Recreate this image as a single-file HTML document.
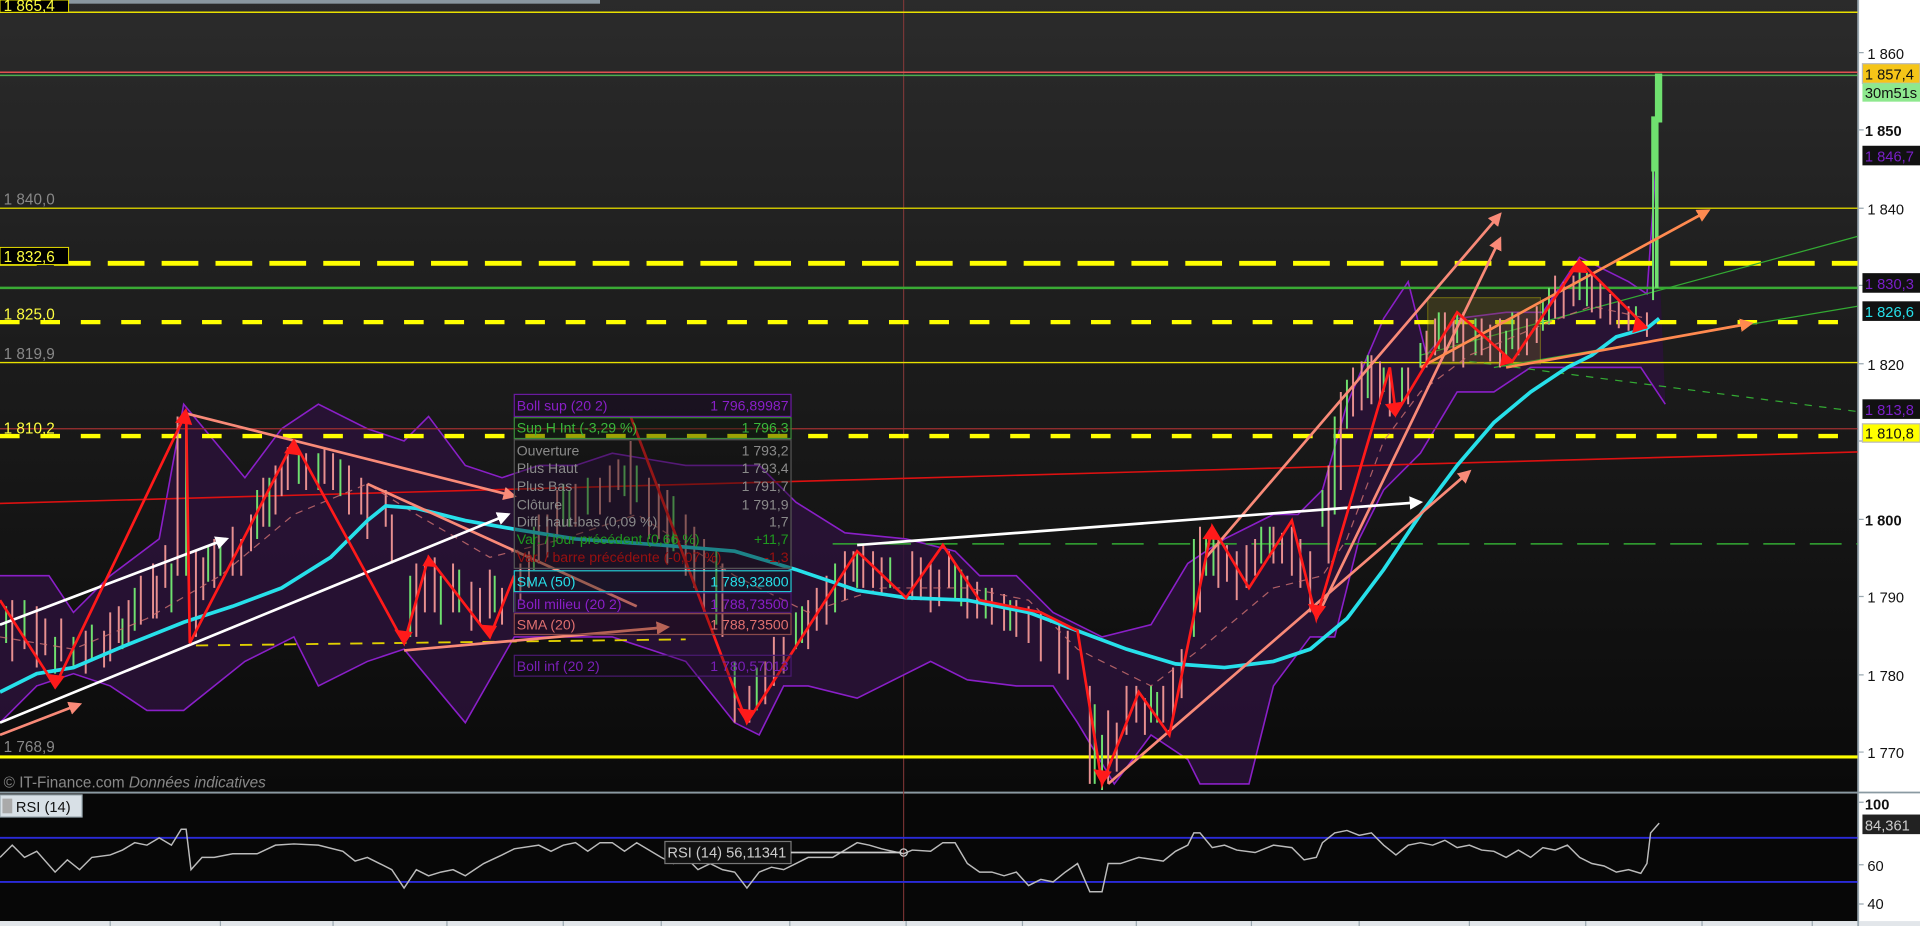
<!DOCTYPE html>
<html><head><meta charset="utf-8"><style>
html,body{margin:0;padding:0;background:#fff;overflow:hidden}
svg{display:block}
text{font-family:"Liberation Sans",sans-serif}
</style></head><body>
<svg width="1920" height="926" viewBox="0 0 1568 756" preserveAspectRatio="none" xmlns="http://www.w3.org/2000/svg">
<defs>
<linearGradient id="bg" x1="0" y1="0" x2="0" y2="1">
<stop offset="0" stop-color="#2b2b2b"/><stop offset="0.5" stop-color="#1a1a1a"/><stop offset="1" stop-color="#0a0a0a"/>
</linearGradient>
<marker id="as" viewBox="0 0 10 10" refX="8" refY="5" markerWidth="5" markerHeight="5" orient="auto"><path d="M0,0L10,5L0,10z" fill="#f98a78"/></marker>
<marker id="aw" viewBox="0 0 10 10" refX="8" refY="5" markerWidth="5" markerHeight="5" orient="auto"><path d="M0,0L10,5L0,10z" fill="#fff"/></marker>
<marker id="ao" viewBox="0 0 10 10" refX="8" refY="5" markerWidth="5" markerHeight="5" orient="auto"><path d="M0,0L10,5L0,10z" fill="#ff8a50"/></marker>
</defs>
<rect x="0" y="0" width="1517" height="648" fill="url(#bg)"/>
<rect x="0" y="648" width="1517" height="104" fill="#070707"/>
<rect x="1517" y="0" width="51" height="756" fill="#fff"/>
<rect x="0" y="752" width="1568" height="4" fill="#e2e6ea"/>
<line x1="1517.5" y1="0" x2="1517.5" y2="756" stroke="#9aa8b0" stroke-width="1.5"/>
<line x1="0" y1="647" x2="1568" y2="647" stroke="#8a9aa2" stroke-width="1.5"/>
<rect x="0" y="0" width="490" height="3" fill="#8a97a0"/>
<line x1="738" y1="0" x2="738" y2="752" stroke="#8a3a3a" stroke-width="0.8"/>

<!-- bollinger fill -->
<path d="M0,470 L40,470 60,500 90,470 130,440 150,330 200,390 230,350 260,330 300,350 330,360 350,340 380,380 410,390 440,380 470,380 500,370 560,380 620,380 650,410 690,435 740,440 780,450 800,470 830,470 860,500 880,510 900,520 940,510 970,460 1000,440 1040,420 1060,420 1080,400 1100,330 1130,260 1150,230 1165,290 1190,260 1230,255 1260,255 1290,210 1330,230 1345,240 1352,140 1360,330 1340,300 1300,300 1250,300 1220,320 1190,320 1160,370 1130,400 1110,440 1090,520 1070,520 1040,560 1020,640 980,640 970,620 940,600 910,640 880,590 860,560 830,560 790,555 760,540 720,560 700,570 660,560 640,560 620,600 600,590 560,540 500,520 460,520 420,520 380,590 330,530 300,540 260,560 240,520 200,540 150,580 120,580 90,560 60,550 30,560 0,590 Z" fill="#2a1238" opacity="0.85"/>
<path d="M0,470 L40,470 60,500 90,470 130,440 150,330 200,390 230,350 260,330 300,350 330,360 350,340 380,380 410,390 440,380 470,380 500,370 560,380 620,380 650,410 690,435 740,440 780,450 800,470 830,470 860,500 880,510 900,520 940,510 970,460 1000,440 1040,420 1060,420 1080,400 1100,330 1130,260 1150,230 1165,290 1190,260 1230,255 1260,255 1290,210 1330,230 1345,240 1352,140" fill="none" stroke="#8a1fc8" stroke-width="1.3"/>
<path d="M1360,330 L1340,300 1300,300 1250,300 1220,320 1190,320 1160,370 1130,400 1110,440 1090,520 1070,520 1040,560 1020,640 980,640 970,620 940,600 910,640 880,590 860,560 830,560 790,555 760,540 720,560 700,570 660,560 640,560 620,600 600,590 560,540 500,520 460,520 420,520 380,590 330,530 300,540 260,560 240,520 200,540 150,580 120,580 90,560 60,550 30,560 0,590" fill="none" stroke="#8a1fc8" stroke-width="1.3"/>

<!-- horizontal levels -->
<line x1="0" y1="10" x2="1517" y2="10" stroke="#e8e000" stroke-width="1.3"/>
<line x1="0" y1="59" x2="1517" y2="59" stroke="#e05050" stroke-width="1.2"/>
<line x1="0" y1="61.5" x2="1517" y2="61.5" stroke="#4caf50" stroke-width="1.2"/>
<line x1="0" y1="170" x2="1517" y2="170" stroke="#c8c000" stroke-width="1.2"/>
<line x1="0" y1="215" x2="1517" y2="215" stroke="#ffff00" stroke-width="4" stroke-dasharray="30,14"/>
<line x1="0" y1="235" x2="1517" y2="235" stroke="#3aaa35" stroke-width="2"/>
<line x1="0" y1="263" x2="1517" y2="263" stroke="#ffff00" stroke-width="3.5" stroke-dasharray="16,17"/>
<line x1="0" y1="296" x2="1517" y2="296" stroke="#e8e000" stroke-width="1.2"/>
<line x1="0" y1="350" x2="1517" y2="350" stroke="#a03030" stroke-width="1"/>
<line x1="0" y1="356" x2="1517" y2="356" stroke="#ffff00" stroke-width="3.5" stroke-dasharray="16,17"/>
<line x1="0" y1="411" x2="1517" y2="369" stroke="#dd1111" stroke-width="1.3"/>
<line x1="680" y1="444" x2="1517" y2="444" stroke="#33aa33" stroke-width="1.2" stroke-dasharray="26,12"/>
<line x1="0" y1="618" x2="1517" y2="618" stroke="#ffff00" stroke-width="2.5"/>
<line x1="160" y1="527" x2="560" y2="522" stroke="#e0d000" stroke-width="1.5" stroke-dasharray="10,8"/>
<line x1="1200" y1="295" x2="1517" y2="336" stroke="#33aa33" stroke-width="1" stroke-dasharray="6,6"/>
<line x1="1160" y1="290" x2="1517" y2="193" stroke="#33aa33" stroke-width="1"/>
<line x1="1220" y1="300" x2="1517" y2="250" stroke="#33aa33" stroke-width="1"/>
<rect x="1166" y="243" width="92" height="54" fill="#6a6020" opacity="0.35" stroke="#e8e000" stroke-width="1"/>

<!-- candle texture -->
<g stroke="#e89090" stroke-width="1.6">
<path d="M10,490V540M20,500V530M30,495V545M50,505V540M70,515V550M90,500V540M105,490V525M115,470V510M125,460V505M135,445V480M145,340V470M160,450V520M175,440V480M190,430V470M205,420V450M215,390V430M225,380V420M235,365V400M250,370V400M265,365V395M285,380V420M300,395V440M315,400V430M340,460V520M355,455V500M370,460V500M385,475V515M400,465V505M410,480V510M425,460V490M440,420V460M455,400V440M470,395V430M490,390V420M505,375V400M515,360V420M530,390V440M545,400V460M560,420V470M575,440V500M590,460V520M612,560V590M625,540V575M640,520V550M660,490V530M675,470V510M690,450V490M705,445V480M720,455V485M745,450V490M760,460V500M775,450V480M790,470V505M810,480V510M830,490V520M850,500V540M865,510V550M890,560V640M905,580V640M920,560V600M935,570V600M950,560V590M965,530V570M980,430V500M995,440V480M1010,450V490M1025,440V470M1040,430V460M1055,430V470M1070,450V500M1085,380V460M1095,320V400M1105,300V340M1120,290V330M1135,300V340M1150,300V330M1165,270V300M1180,255V290M1195,255V300M1210,260V290M1225,260V300M1240,255V290M1255,250V280M1270,225V260M1285,225V250M1300,225V255M1315,240V265M1330,250V270M1345,255V275"/>
<path d="M37,505V535M85,515V545M97,495V525M128,470V505M166,455V490M197,440V470M230,380V405M272,370V400M295,390V420M320,420V460M347,460V500M392,480V510M432,450V480M447,420V455M498,380V410M538,395V440M567,430V480M600,560V590M632,520V560M667,480V515M697,450V475M713,450V480M752,455V490M767,465V495M798,475V505M820,485V515M840,495V525M872,515V555M912,590V630M928,560V590M958,545V585M1002,445V475M1018,445V480M1047,435V460M1062,440V480M1112,295V335M1127,295V330M1172,260V290M1187,260V295M1217,265V295M1247,260V290M1277,230V260M1307,230V260M1322,245V268"/>
</g>
<g stroke="#6fe06f" stroke-width="1.6" fill="none">
<path d="M20,490V520M60,520V545M100,505V530M140,460V500M180,440V470M220,390V430M260,370V400M360,470V510M420,470V500M460,395V430M520,380V410M600,540V570M650,500V530M700,450V480M780,460V490M900,600V645M940,560V590M985,440V470M1030,430V460M1080,400V430M1100,310V350M1130,300V320M1160,280V300M1190,255V280M1230,270V290M1260,245V270M1290,220V245M1350,140V245"/>
<path d="M5,495V525M45,520V550M75,510V540M110,480V515M152,340V470M170,445V475M210,400V440M244,370V395M278,375V405M335,470V520M375,465V500M404,470V500M436,430V465M465,400V430M480,390V420M510,380V405M550,405V450M585,450V510M618,545V580M655,495V525M682,460V500M727,455V480M785,465V495M805,480V505M825,490V515M894,575V640M945,565V590M975,440V520M991,435V470M1037,430V455M1090,340V420M1117,290V325M1145,300V330M1175,255V285M1205,260V290M1235,255V285M1265,235V265M1296,222V250M1336,250V270"/>
</g>
<path d="M1353,60 V235 M1350,95 V140 M1356,60 V100" stroke="#6fe06f" stroke-width="3"/>

<!-- SMA20 dashed -->
<path d="M0,520 L60,530 120,505 180,470 240,420 300,395 340,420 400,455 460,440 520,420 600,470 660,500 720,480 790,480 840,490 880,530 940,560 980,530 1040,480 1080,470 1100,440 1130,360 1160,320 1200,290 1260,265 1300,250 1345,260" fill="none" stroke="#d07070" stroke-width="1" stroke-dasharray="6,5" opacity="0.8"/>
<!-- SMA50 cyan -->
<path d="M0,565 L30,550 60,545 100,528 150,508 190,495 230,480 270,455 300,425 315,413 340,415 380,425 420,432 470,440 540,445 600,450 650,465 700,482 740,488 790,490 840,500 880,515 920,530 960,542 1000,545 1040,540 1070,530 1100,505 1130,465 1160,420 1190,380 1220,345 1250,320 1280,300 1300,290 1320,275 1345,268 1355,260" fill="none" stroke="#27e0ea" stroke-width="3"/>

<!-- trend arrows -->
<g fill="none" stroke-width="2.2">
<path d="M150,337 L420,405" stroke="#f98a78" marker-end="url(#as)"/>
<path d="M300,395 L520,495" stroke="#f98a78"/>
<path d="M330,531 L545,512" stroke="#f98a78" marker-end="url(#as)"/>
<path d="M0,600 L65,575" stroke="#f98a78" marker-end="url(#as)"/>
<path d="M905,640 L1200,385" stroke="#f98a78" marker-end="url(#as)"/>
<path d="M985,455 L1225,175" stroke="#f98a78" marker-end="url(#as)"/>
<path d="M1075,505 L1225,195" stroke="#f98a78" marker-end="url(#as)"/>
<path d="M1160,300 L1395,172" stroke="#ff8a50" marker-end="url(#ao)"/>
<path d="M1230,300 L1430,264" stroke="#ff8a50" marker-end="url(#ao)"/>
<path d="M0,510 L185,440" stroke="#fff" marker-end="url(#aw)"/>
<path d="M0,590 L415,420" stroke="#fff" marker-end="url(#aw)"/>
<path d="M700,445 L1160,410" stroke="#fff" marker-end="url(#aw)"/>
</g>
<!-- red zigzag -->
<path d="M0,490 L45,560 L152,337 L155,525 L240,360 L330,525 L350,455 L400,520 L420,470 M515,340 L610,590 L700,450 L740,488 L770,445 L800,490 L850,500 L880,515 L900,640 L930,565 L955,600 L990,430 L1020,480 L1055,425 L1075,505 L1135,300 L1140,338 L1190,255 L1235,295 L1290,213 L1345,268" fill="none" stroke="#ff1a1a" stroke-width="2.2"/>
<g fill="#ff1a1a">
<path d="M143,345l9,-12l5,14z"/><path d="M37,550l8,13l8,-11z"/><path d="M232,370l8,-12l6,14z"/><path d="M322,514l8,13l7,-11z"/><path d="M602,578l8,13l7,-11z"/><path d="M893,628l7,13l8,-11z"/><path d="M1068,493l7,13l8,-11z"/><path d="M1281,222l9,-11l7,12z"/><path d="M1336,258l9,10l-12,4z"/><path d="M345,462l5,-9l6,10z"/><path d="M392,510l8,11l6,-10z"/><path d="M982,440l8,-12l6,13z"/><path d="M1131,330l8,10l6,-12z"/><path d="M1227,288l8,8l-10,3z"/>
</g>

<!-- tooltip -->
<g font-size="11.5">
<rect x="420" y="322" width="226" height="18" fill="#1a0a26" fill-opacity="0.5" stroke="#6a1aa0"/>
<text x="422" y="335" fill="#8a1fc8">Boll sup (20 2)</text><text x="644" y="335" fill="#8a1fc8" text-anchor="end">1 796,89987</text>
<rect x="420" y="341" width="226" height="17" fill="#0a1a0a" fill-opacity="0.4" stroke="#3a8a3a"/>
<text x="422" y="353" fill="#3ab83a">Sup H Int (-3,29 %)</text><text x="644" y="353" fill="#3ab83a" text-anchor="end">1 796,3</text>
<rect x="420" y="359" width="226" height="105" fill="#111" fill-opacity="0.45" stroke="#555"/>
<g fill="#8a8a8a">
<text x="422" y="372">Ouverture</text><text x="644" y="372" text-anchor="end">1 793,2</text>
<text x="422" y="386">Plus Haut</text><text x="644" y="386" text-anchor="end">1 793,4</text>
<text x="422" y="401">Plus Bas</text><text x="644" y="401" text-anchor="end">1 791,7</text>
<text x="422" y="416">Clôture</text><text x="644" y="416" text-anchor="end">1 791,9</text>
<text x="422" y="430">Diff. haut-bas (0,09 %)</text><text x="644" y="430" text-anchor="end">1,7</text>
</g>
<text x="422" y="444" fill="#1f9a1f">Var. / jour précédent (0,66 %)</text><text x="644" y="444" fill="#1f9a1f" text-anchor="end">+11,7</text>
<text x="422" y="459" fill="#9a1010">Var. / barre précédente (-0,07 %)</text><text x="644" y="459" fill="#9a1010" text-anchor="end">-1,3</text>
<rect x="420" y="466" width="226" height="17" fill="#0a1a1a" fill-opacity="0.4" stroke="#22c8d0"/>
<text x="422" y="479" fill="#27e0ea">SMA (50)</text><text x="644" y="479" fill="#27e0ea" text-anchor="end">1 789,32800</text>
<rect x="420" y="484" width="226" height="16" fill="#1a0a26" fill-opacity="0.3" stroke="#4a1a70"/>
<text x="422" y="497" fill="#8a1fc8">Boll milieu (20 2)</text><text x="644" y="497" fill="#8a1fc8" text-anchor="end">1 788,73500</text>
<rect x="420" y="501" width="226" height="17" fill="#1a0a0a" fill-opacity="0.3" stroke="#8a4a4a"/>
<text x="422" y="514" fill="#e07070">SMA (20)</text><text x="644" y="514" fill="#e07070" text-anchor="end">1 788,73500</text>
<rect x="420" y="535" width="226" height="17" fill="#1a0a26" fill-opacity="0.3" stroke="#4a1a70"/>
<text x="422" y="548" fill="#7a1fb8">Boll inf (20 2)</text><text x="644" y="548" fill="#7a1fb8" text-anchor="end">1 780,57013</text>
</g>

<!-- left labels -->
<g font-size="12.5">
<rect x="0" y="0" width="56" height="10" fill="#000" stroke="#e8e000" stroke-width="0.8"/>
<text x="3" y="9" fill="#ffff40">1 865,4</text>
<text x="3" y="167" fill="#888">1 840,0</text>
<rect x="0" y="202" width="56" height="14" fill="#000" stroke="#e8e000" stroke-width="0.8"/>
<text x="3" y="214" fill="#ffff40">1 832,6</text>
<text x="3" y="261" fill="#ffff40">1 825,0</text>
<text x="3" y="293" fill="#888">1 819,9</text>
<text x="3" y="354" fill="#ffff40">1 810,2</text>
<text x="3" y="614" fill="#888">1 768,9</text>
<text x="3" y="643" fill="#888">© IT-Finance.com <tspan font-style="italic">Données indicatives</tspan></text>
</g>

<!-- RSI -->
<line x1="0" y1="684" x2="1517" y2="684" stroke="#2a2ad8" stroke-width="1.5"/>
<line x1="0" y1="720" x2="1517" y2="720" stroke="#2a2ad8" stroke-width="1.5"/>
<path d="M0,700 L10,690 20,700 30,695 45,712 55,702 65,710 75,700 90,698 100,694 110,688 120,690 130,684 140,690 148,677 152,677 156,710 165,700 175,700 190,697 210,697 225,690 240,689 260,690 280,695 290,703 300,700 310,705 320,710 330,725 340,710 350,715 360,712 370,710 380,715 395,705 410,698 420,693 440,690 450,695 460,690 470,688 480,695 490,688 500,688 510,695 520,688 540,700 550,705 560,700 570,710 580,705 590,710 600,712 610,725 620,712 630,708 640,710 650,705 660,700 680,700 700,688 710,690 720,693 738,697 745,694 760,695 770,688 780,688 790,705 800,712 810,712 820,715 830,712 840,723 850,718 860,720 870,712 880,705 890,728 900,728 905,705 915,705 930,700 950,703 960,695 970,690 975,680 980,680 990,692 1000,690 1010,694 1025,696 1040,690 1055,692 1065,702 1075,700 1080,688 1090,680 1100,678 1110,682 1120,680 1130,690 1140,698 1150,690 1160,688 1170,690 1180,686 1190,692 1200,690 1210,694 1220,695 1230,700 1240,694 1250,700 1260,692 1270,694 1280,690 1290,700 1300,705 1310,707 1320,712 1330,710 1340,713 1345,705 1348,680 1355,672" fill="none" stroke="#bbb" stroke-width="1.2"/>
<rect x="0" y="649" width="67" height="18" fill="#d8e0e6" stroke="#9aa8b0"/>
<rect x="2" y="652" width="8" height="12" fill="#aaa"/>
<text x="13" y="663" font-size="12" fill="#111">RSI (14)</text>
<rect x="543" y="687" width="103" height="18" fill="#111" stroke="#777"/>
<text x="545" y="700" font-size="12" fill="#ccc">RSI (14)  56,11341</text>
<line x1="646" y1="696" x2="736" y2="696" stroke="#ccc" stroke-width="1.5"/>
<circle cx="738" cy="696" r="3" fill="none" stroke="#ccc"/>

<g stroke="#9aa8b0" stroke-width="1">
<path d="M90,752v4M180,752v4M272,752v4M365,752v4M460,752v4M540,752v4M645,752v4M740,752v4M835,752v4M928,752v4M1022,752v4M1110,752v4M1200,752v4M1295,752v4M1390,752v4M1480,752v4"/>
</g>

<!-- right axis -->
<g font-size="12" fill="#111">
<g stroke="#9aa8b0"><path d="M1517,43h5M1517,106h5M1517,170h5M1517,233h5M1517,297h5M1517,360h5M1517,424h5M1517,487h5M1517,551h5M1517,614h5M1517,655h5M1517,706h5M1517,738h5"/></g>
<text x="1525" y="48">1 860</text>
<text x="1523" y="111" font-weight="bold">1 850</text>
<text x="1525" y="175">1 840</text>
<text x="1525" y="302">1 820</text>
<text x="1523" y="429" font-weight="bold">1 800</text>
<text x="1525" y="492">1 790</text>
<text x="1525" y="556">1 780</text>
<text x="1525" y="619">1 770</text>
<text x="1523" y="661" font-weight="bold">100</text>
<text x="1525" y="711">60</text>
<text x="1525" y="742">40</text>
</g>
<rect x="1521" y="52" width="47" height="16" fill="#f5c518" stroke="#bbb"/>
<text x="1523" y="65" font-size="12" fill="#111">1 857,4</text>
<rect x="1521" y="68" width="47" height="15" fill="#8ee88e"/>
<text x="1523" y="80" font-size="12" fill="#111">30m51s</text>
<rect x="1521" y="119" width="47" height="16" fill="#111"/>
<text x="1523" y="132" font-size="12" fill="#7a1fc8">1 846,7</text>
<rect x="1521" y="223" width="47" height="16" fill="#111"/>
<text x="1523" y="236" font-size="12" fill="#7a1fc8">1 830,3</text>
<rect x="1521" y="246" width="47" height="16" fill="#111"/>
<text x="1523" y="259" font-size="12" fill="#27e0ea">1 826,6</text>
<rect x="1521" y="326" width="47" height="16" fill="#111"/>
<text x="1523" y="339" font-size="12" fill="#7a1fc8">1 813,8</text>
<rect x="1521" y="346" width="47" height="15" fill="#ffff00" stroke="#bbb"/>
<text x="1523" y="358" font-size="12" fill="#111">1 810,8</text>
<rect x="1521" y="665" width="47" height="16" fill="#222"/>
<text x="1523" y="678" font-size="12" fill="#ccc">84,361</text>
</svg>
</body></html>
